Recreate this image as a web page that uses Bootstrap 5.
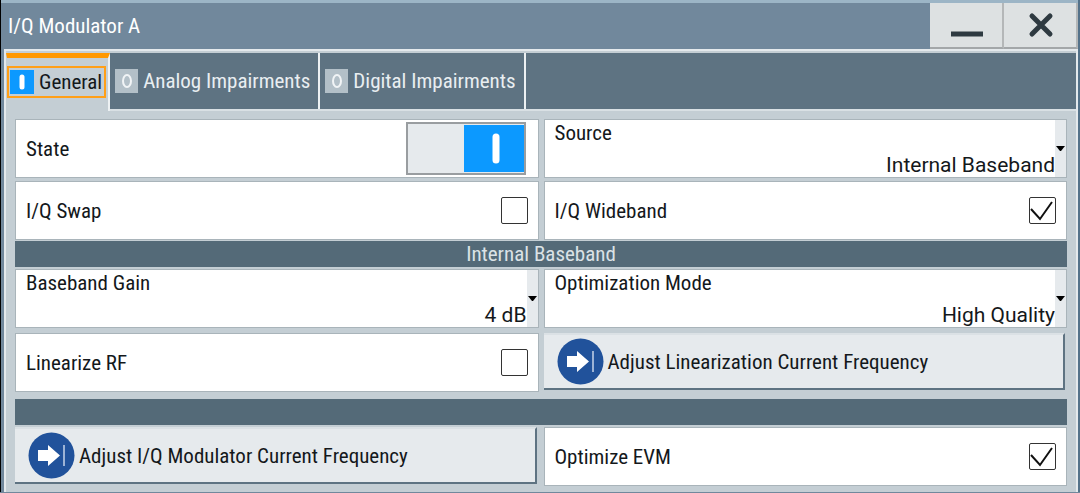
<!DOCTYPE html>
<html lang="en">
<head>
<meta charset="utf-8">
<meta name="viewport" content="width=device-width, initial-scale=1">
<title>I/Q Modulator A</title>
<link href="https://cdn.jsdelivr.net/npm/bootstrap@5.3.0/dist/css/bootstrap.min.css" rel="stylesheet">
<style>
:root { --slate: #5e7382; --bar: #546a78; --panel: #c4ced4; --edge: #a9b4ba; --soft: #e6eaed; --ink: #14181b; }
body { background: #71889c; color: var(--ink); font-family: "Roboto Condensed", "Liberation Sans Narrow", Roboto, sans-serif; font-size: 21px; line-height: 24px; }
button, input, select { font: inherit; color: inherit; }
.window { border-left: 1px solid #000; border-right: 2px solid #54728a; }
.titlebar { height: 49px; border-top: 3px solid #9cb5c6; color: #fff; padding-left: 7px; }
.titlebar h1 { font-size: 21px; line-height: 24px; font-weight: 400; color: #fff; }
.winbtn { width: 74px; border: 0; border-right: 2px solid #b4b7b8; border-bottom: 2px solid #a3a7a9; background: #dde1e2; padding: 0; }
.panel { margin-left: 3px; background: var(--panel); border: 2px solid #e4e9ec; border-bottom: 0; padding: 2px 0 6px; }
.tabs { background: var(--slate); border-bottom: 2px solid #d9e0e4; }
.tabbtn { height: 56px; border: 0; border-right: 2px solid #edf1f3; background: var(--slate); color: #e9eef1; padding: 0 8px 0 5px; gap: 5px; }
.tabbtn.active { height: 58px; margin-bottom: -2px; background: var(--panel); color: var(--ink); border-top: 5px solid #ff9800; border-left: 1px solid var(--panel); padding: 0 2px 6px 0; }
.tabfocus { border: 2px solid #ff9f17; padding: 2px 2px 2px 1px; gap: 5px; }
.form-area { padding: 8px 9px 0 9px; }
.pair { display: grid; grid-template-columns: 1fr 1fr; column-gap: 5px; row-gap: 3px; }
.space-above { margin-top: 5px; }
.space-below { margin-bottom: 7px; }
.field { height: 59px; background: #fff; border: 1px solid var(--edge); }
.line { padding: 0 10px; }
.stack { padding: 1px 0 0 10px; }
.section-bar { height: 26px; margin: 1px 0 2px; background: var(--bar); color: #dbe2e6; font-size: 21px; font-weight: 400; line-height: 26px; text-align: center; }
.strip { width: 11px; background: var(--soft); }
.picker { font-family: Roboto, sans-serif; font-size: 21px; line-height: 24px; height: 24px; appearance: none; border: 0; background: transparent; text-align: right; text-align-last: right; padding: 0; }
.tick { appearance: none; width: 27px; height: 27px; margin: 0; border: 1px solid #333; border-radius: 2px; background: #fff; }
.tick:checked { background: #fff url("data:image/svg+xml,%3Csvg xmlns='http://www.w3.org/2000/svg' viewBox='0 0 25 25'%3E%3Cpath d='M1 11L10 21L22 4' fill='none' stroke='%23111' stroke-width='2'/%3E%3C/svg%3E") center / 100% 100%; }
.toggle { appearance: none; width: 120px; height: 53px; margin: 0 2px 0 0; border: 2px solid #999da0; background: var(--soft) url("data:image/svg+xml,%3Csvg xmlns='http://www.w3.org/2000/svg' width='60' height='47' viewBox='0 0 60 47'%3E%3Cpath d='M0 0H60V47H0Z' fill='%230c99ff'/%3E%3Cpath d='M32 12V35' stroke='white' stroke-width='7' stroke-linecap='round'/%3E%3C/svg%3E") right center no-repeat; }
.action { height: 57px; margin-right: 2px; border: 0; border-top: 2px solid #dbe1e5; border-right: 2px solid var(--slate); border-bottom: 2px solid var(--slate); background: var(--soft); padding: 0 0 0 13px; gap: 4px; }
</style>
</head>
<body>
<main class="window">
  <header class="titlebar d-flex align-items-stretch">
    <h1 class="m-0 me-auto align-self-center">I/Q Modulator A</h1>
    <button class="winbtn" type="button" aria-label="Minimize"><svg width="72" height="44" viewBox="0 0 72 44"><path d="M21 31H53" stroke="#2e3a41" stroke-width="5"/></svg></button>
    <button class="winbtn" type="button" aria-label="Close"><svg width="72" height="44" viewBox="0 0 72 44"><path d="M28 13L46 31M46 13L28 31" stroke="#2e3a41" stroke-width="5" stroke-linecap="round"/></svg></button>
  </header>
  <div class="panel">
    <nav class="tabs d-flex" role="tablist">
      <button class="tabbtn active d-flex align-items-center" type="button" role="tab" aria-selected="true">
        <span class="tabfocus d-flex align-items-center"><svg width="24" height="24" viewBox="0 0 24 24"><path d="M0 0H24V24H0Z" fill="#0c99ff"/><path d="M12 7V17" stroke="#fff" stroke-width="5" stroke-linecap="round"/></svg>General</span>
      </button>
      <button class="tabbtn d-flex align-items-center" type="button" role="tab" aria-selected="false"><svg width="23" height="24" viewBox="0 0 23 24"><path d="M0 0H23V24H0Z" fill="#b3c0c8"/><ellipse cx="12" cy="12" rx="4" ry="6" fill="none" stroke="#f1f4f6" stroke-width="2"/></svg>Analog Impairments</button>
      <button class="tabbtn d-flex align-items-center" type="button" role="tab" aria-selected="false"><svg width="23" height="24" viewBox="0 0 23 24"><path d="M0 0H23V24H0Z" fill="#b3c0c8"/><ellipse cx="12" cy="12" rx="4" ry="6" fill="none" stroke="#f1f4f6" stroke-width="2"/></svg>Digital Impairments</button>
    </nav>
    <form class="form-area">
      <div class="pair">
        <div class="field line d-flex align-items-center justify-content-between"><label for="state">State</label><input class="toggle" id="state" type="checkbox" role="switch" checked></div>
        <div class="field d-flex">
          <div class="stack flex-grow-1 d-flex flex-column justify-content-between"><label for="source">Source</label><select class="picker" id="source"><option>Internal Baseband</option></select></div>
          <span class="strip d-flex align-items-center"><svg width="11" height="6" viewBox="0 0 11 6"><path d="M1 0H10L6 5H5Z"/></svg></span>
        </div>
        <div class="field line d-flex align-items-center justify-content-between"><label for="swap">I/Q Swap</label><input class="tick" id="swap" type="checkbox"></div>
        <div class="field line d-flex align-items-center justify-content-between"><label for="wide">I/Q Wideband</label><input class="tick" id="wide" type="checkbox" checked></div>
      </div>
      <h2 class="section-bar">Internal Baseband</h2>
      <div class="pair">
        <div class="field d-flex">
          <div class="stack flex-grow-1 d-flex flex-column justify-content-between"><label for="gain">Baseband Gain</label><select class="picker" id="gain"><option>4 dB</option></select></div>
          <span class="strip d-flex align-items-center"><svg width="11" height="6" viewBox="0 0 11 6"><path d="M1 0H10L6 5H5Z"/></svg></span>
        </div>
        <div class="field d-flex">
          <div class="stack flex-grow-1 d-flex flex-column justify-content-between"><label for="mode">Optimization Mode</label><select class="picker" id="mode"><option>High Quality</option></select></div>
          <span class="strip d-flex align-items-center"><svg width="11" height="6" viewBox="0 0 11 6"><path d="M1 0H10L6 5H5Z"/></svg></span>
        </div>
      </div>
      <div class="pair space-above space-below">
        <div class="field line d-flex align-items-center justify-content-between"><label for="linear">Linearize RF</label><input class="tick" id="linear" type="checkbox"></div>
        <button class="action d-flex align-items-center" type="button"><svg width="47" height="47" viewBox="0 0 47 47"><circle cx="23.500" cy="23.500" r="23" fill="#21529b"/><path d="M10 18H20V13L32 23.500L20 34V29H10Z" fill="#fff"/><path d="M36 13V34" stroke="#9db3d5" stroke-width="2"/></svg>Adjust Linearization Current Frequency</button>
      </div>
      <div class="section-bar"></div>
      <div class="pair">
        <button class="action d-flex align-items-center" type="button"><svg width="47" height="47" viewBox="0 0 47 47"><circle cx="23.500" cy="23.500" r="23" fill="#21529b"/><path d="M10 18H20V13L32 23.500L20 34V29H10Z" fill="#fff"/><path d="M36 13V34" stroke="#9db3d5" stroke-width="2"/></svg>Adjust I/Q Modulator Current Frequency</button>
        <div class="field line d-flex align-items-center justify-content-between"><label for="evm">Optimize EVM</label><input class="tick" id="evm" type="checkbox" checked></div>
      </div>
    </form>
  </div>
</main>
<script src="https://cdn.jsdelivr.net/npm/bootstrap@5.3.0/dist/js/bootstrap.bundle.min.js"></script>
</body>
</html>
